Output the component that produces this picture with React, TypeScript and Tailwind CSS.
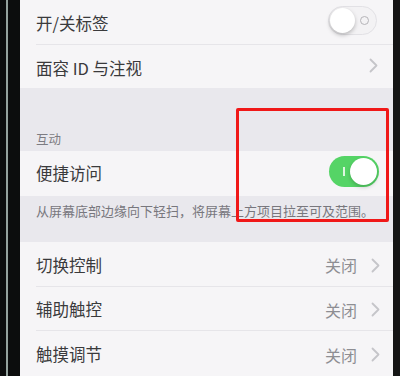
const font = "font-['Noto_Sans_CJK_SC','Noto_Sans',sans-serif]";

const Chevron = () => (
  <svg width="9" height="15" viewBox="0 0 9 15" className="shrink-0">
    <path d="M1.5 1.5 L7.5 7.5 L1.5 13.5" fill="none" stroke="#c5c5c9" strokeWidth="1.8" strokeLinecap="round" strokeLinejoin="round" />
  </svg>
);

const ToggleOff = () => (
  <div className="relative h-[29px] w-[49px] rounded-full border border-[#e2e1e5] bg-[#f3f2f4]">
    <div className="absolute left-[1px] top-[1px] h-[25px] w-[25px] rounded-full bg-white shadow-[0_2px_4px_rgba(0,0,0,0.25)]" />
    <div className="absolute right-[7px] top-[9px] h-[9px] w-[9px] rounded-full border-[1.5px] border-[#b5b4b8]" />
  </div>
);

const ToggleOn = () => (
  <div className="relative h-[31px] w-[50px] rounded-full bg-[#55d466]">
    <div className="absolute left-[14px] top-[11px] h-[9px] w-[1.5px] bg-white/80" />
    <div className="absolute right-[2px] top-[2px] h-[27px] w-[27px] rounded-full bg-white shadow-[0_2px_4px_rgba(0,0,0,0.2)]" />
  </div>
);

const NavRow = ({ label, value, last }: { label: string; value?: string; last?: boolean }) => (
  <div className="flex h-[45px] items-center pl-[16px] pt-[2px] bg-[#f6f5f7]">
    <div className={`flex h-full flex-1 items-center pr-[13px] ${last ? "" : "border-b border-[#e6e5e9]"}`}>
      <span className="flex-1 text-[16.5px] text-[#3a3a3c]">{label}</span>
      {value && <span className="mr-[14px] text-[16px] text-[#8e8e93]">{value}</span>}
      <Chevron />
    </div>
  </div>
);

export default function App() {
  return (
    <div className={`relative flex h-[376px] w-[400px] overflow-hidden bg-black ${font}`}>
      {/* phone bezel */}
      <div className="flex w-[20px] shrink-0 bg-[#0c0d0d]">
        <div className="ml-[6px] w-[2px] bg-[#cfe3dc]/70" />
      </div>

      <div className="flex flex-1 flex-col bg-[#e9e8ed]">
        <div className="flex h-[45px] items-center bg-[#f6f5f7] pl-[16px] pt-[4px]">
          <div className="flex h-full flex-1 items-center border-b border-[#e6e5e9] pr-[16px]">
            <span className="flex-1 text-[16.5px] text-[#3a3a3c]">开/关标签</span>
            <div className="-mt-[6px]">
              <ToggleOff />
            </div>
          </div>
        </div>
        <div className="flex h-[44px] items-center bg-[#f6f5f7] pl-[16px] pt-[4px]">
          <div className="flex h-full flex-1 items-center pr-[15px]">
            <span className="flex-1 text-[16.5px] text-[#3a3a3c]">面容 ID 与注视</span>
            <div className="-mt-[6px]">
              <Chevron />
            </div>
          </div>
        </div>

        <div className="flex h-[64px] items-end px-[16px] pb-[3px]">
          <span className="text-[12.5px] text-[#7d7c82]">互动</span>
        </div>

        <div className="flex h-[45px] items-center bg-[#f6f5f7] pl-[16px] pr-[14px]">
          <span className="flex-1 text-[16.5px] text-[#3a3a3c]">便捷访问</span>
          <div className="-mt-[4px]">
            <ToggleOn />
          </div>
        </div>

        <div className="h-[47px] px-[16px] pt-[6px]">
          <p className="whitespace-nowrap text-[13px] leading-[18px] text-[#78777d]">
            从屏幕底部边缘向下轻扫，将屏幕上方项目拉至可及范围。
          </p>
        </div>

        <NavRow label="切换控制" value="关闭" />
        <NavRow label="辅助触控" value="关闭" />
        <NavRow label="触摸调节" value="关闭" last />
      </div>

      <div className="w-[7px] shrink-0 bg-[#151515]" />

      {/* red highlight box */}
      <div className="pointer-events-none absolute left-[236px] top-[108px] h-[114px] w-[153px] rounded-[2px] border-[3px] border-[#f01818]" />
    </div>
  );
}
